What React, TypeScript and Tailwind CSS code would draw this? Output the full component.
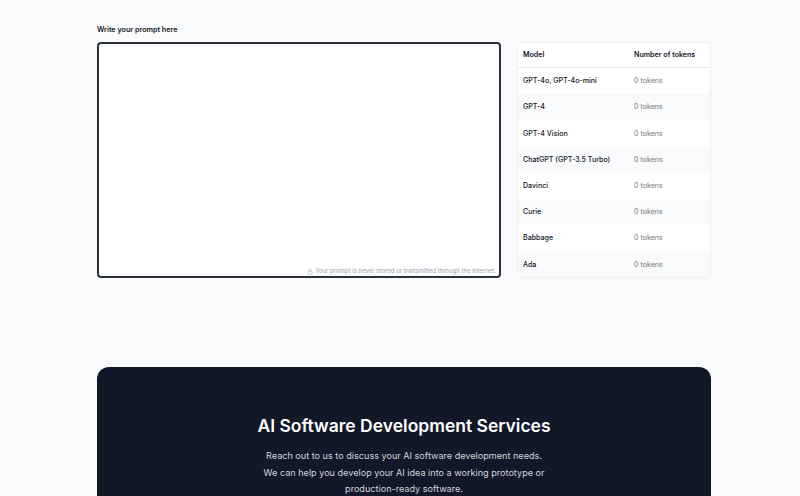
const rows = [
  'GPT-4o, GPT-4o-mini',
  'GPT-4',
  'GPT-4 Vision',
  'ChatGPT (GPT-3.5 Turbo)',
  'Davinci',
  'Curie',
  'Babbage',
  'Ada',
];

export default function App() {
  return (
    <div className="h-screen overflow-hidden bg-[#f9fafb] font-['Inter',sans-serif]">
      <div className="mx-[97px] w-[614px] pt-[24px]">
        {/* prompt + token table */}
        <label className="block h-[11px] text-[7.2px] leading-[11px] font-semibold text-[#111827]">
          Write your prompt here
        </label>
        <div className="mt-[7px] flex gap-[16px]">
          <div className="flex h-[236px] w-[404px] flex-col justify-end rounded-[4px] border-2 border-[#2a303c] bg-white px-[3px] pb-[1px]">
            <div className="flex items-center justify-end gap-[2px] text-[6.05px] leading-[8px] text-[#9ca3af]">
              <svg width="6" height="7" viewBox="0 0 24 24" fill="none" stroke="#9ca3af" strokeWidth="2">
                <rect x="4" y="11" width="16" height="11" rx="2" />
                <path d="M8 11V7a4 4 0 0 1 8 0v4" />
              </svg>
              <span>Your prompt is never stored or transmitted through the internet.</span>
            </div>
          </div>
          <div className="h-[236px] w-[194px] overflow-hidden rounded-[4px] border border-[#eef0f3] bg-white">
            <div className="flex h-[25px] items-center border-b border-[#e5e7eb] pt-[1px] pr-[5px] pl-[5px] text-[7.1px] font-semibold whitespace-nowrap text-[#111827]">
              <span className="w-[111px]">Model</span>
              <span>Number of tokens</span>
            </div>
            {rows.map((name, i) => (
              <div
                key={name}
                className={`flex h-[26.2px] items-center px-[5px] pt-[1px] text-[7.1px] whitespace-nowrap ${i % 2 === 1 ? 'bg-[#f9fafb]' : 'bg-white'}`}
              >
                <span className="w-[111px] font-medium text-[#111827]">{name}</span>
                <span className="text-[#75757a]">0 tokens</span>
              </div>
            ))}
          </div>
        </div>

        {/* services card */}
        <div className="mt-[89px] flex h-[200px] flex-col items-center rounded-[12px] bg-[#111827] pt-[45px]">
          <h2 className="text-[17.5px] leading-[28px] font-semibold text-white">AI Software Development Services</h2>
          <p className="mt-[8px] w-[290px] text-center text-[9.1px] leading-[16.5px] text-[#d1d5db]">
            Reach out to us to discuss your AI software development needs.
            <br />
            We can help you develop your AI idea into a working prototype or production-ready software.
          </p>
        </div>
      </div>
    </div>
  );
}
